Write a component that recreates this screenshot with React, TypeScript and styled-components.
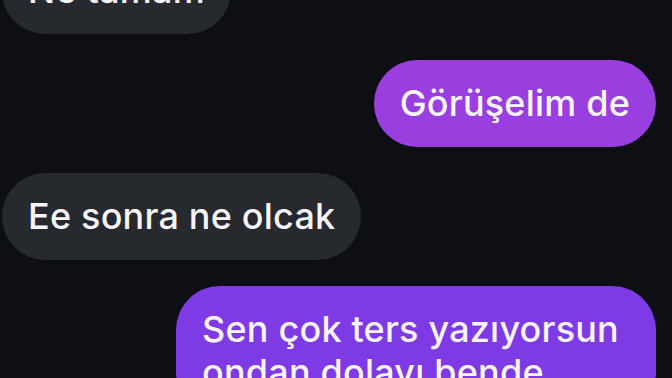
import React from 'react';
import styled, { createGlobalStyle } from 'styled-components';

const GlobalStyle = createGlobalStyle`
  html, body {
    margin: 0;
    padding: 0;
    background: #0d0f14;
    overflow: hidden;
  }
  body {
    font-family: Inter, "Noto Sans", "Liberation Sans", sans-serif;
    -webkit-font-smoothing: antialiased;
  }
`;

const Screen = styled.div`
  width: 672px;
  height: 378px;
  overflow: hidden;
  background: #0d0f14;
`;

// the thread is scrolled, so the first bubble is half out of view
const Thread = styled.div`
  display: flex;
  flex-direction: column;
  gap: 26px;
  margin-top: -53px;
  padding: 0 16px 0 2px;
`;

const Row = styled.div<{ $mine?: boolean }>`
  display: flex;
  justify-content: ${(p) => (p.$mine ? 'flex-end' : 'flex-start')};
`;

const Bubble = styled.div<{ $mine?: boolean; $tint?: string }>`
  max-width: 428px;
  padding: 22px 26px;
  border-radius: 44px;
  background: ${(p) => (p.$mine ? p.$tint || '#9a3fdf' : '#26292e')};
  color: #f7f4fa;
  font-size: 36px;
  line-height: 43px;
  font-weight: 500;
  letter-spacing: 0.2px;
`;

const messages = [
  { text: 'Ne tamam', mine: false },
  { text: 'Görüşelim de', mine: true, tint: '#9a3fdf' },
  { text: 'Ee sonra ne olcak', mine: false },
  { text: 'Sen çok ters yazıyorsun ondan dolayı bende', mine: true, tint: '#7e3ae5' },
];

export default function App() {
  return (
    <Screen>
      <GlobalStyle />
      <Thread>
        {messages.map((m, i) => (
          <Row key={i} $mine={m.mine}>
            <Bubble $mine={m.mine} $tint={m.tint}>
              {m.text}
            </Bubble>
          </Row>
        ))}
      </Thread>
    </Screen>
  );
}
